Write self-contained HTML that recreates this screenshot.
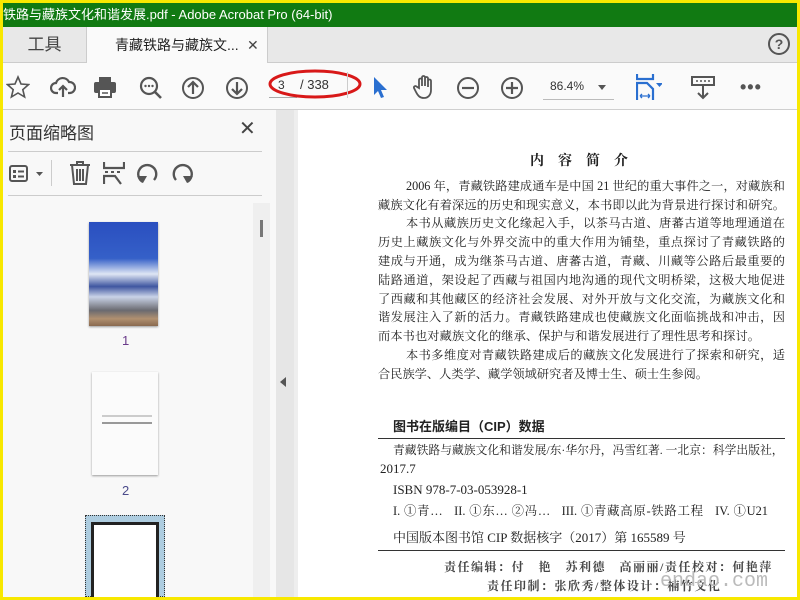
<!DOCTYPE html>
<html><head><meta charset="utf-8"><style>
*{margin:0;padding:0;box-sizing:border-box}
body{width:800px;height:600px;overflow:hidden;background:#f8e800;position:relative;font-family:"Liberation Sans","Noto Sans CJK SC",sans-serif}
.abs{position:absolute}
#title{left:3px;top:3px;width:794px;height:24px;background:#117a12;color:#fff;font-size:13px;line-height:24px;white-space:nowrap;overflow:hidden}
#tabs{left:3px;top:27px;width:794px;height:36px;background:#e8e8e8;border-bottom:1px solid #ccc}
#tool{left:3px;top:63px;width:794px;height:47px;background:#fafafa;border-bottom:1px solid #cfcfcf}
#left{left:3px;top:110px;width:273px;height:487px;background:#f8f8f8}
#split{left:276px;top:110px;width:18px;height:487px;background:#e6e6e6}
#doc{left:294px;top:110px;width:503px;height:487px;background:#fff}
.serif{font-family:"Liberation Serif","Noto Serif CJK SC",serif;color:#222}
.ln{position:absolute;left:378px;width:407px;font-size:12.2px;text-align:justify;text-align-last:justify;white-space:nowrap;line-height:19px;overflow:hidden}
svg{position:absolute}
</style></head><body>
<div id="title" class="abs">铁路与藏族文化和谐发展.pdf - Adobe Acrobat Pro (64-bit)</div>
<div id="tabs" class="abs">
 <div class="abs" style="left:0;top:0;width:83px;height:35px;font-size:17px;color:#444;line-height:35px;text-align:center">工具</div>
 <div class="abs" style="left:83px;top:0;width:182px;height:36px;background:#fafafa;border-left:1px solid #ccc;border-right:1px solid #ccc;font-size:14px;color:#222;line-height:36px;padding-left:28px">青藏铁路与藏族文...<span style="position:absolute;left:160px;font-size:14px;color:#444">✕</span></div>
 <div class="abs" style="left:765px;top:6px;width:22px;height:22px;border:2px solid #555;border-radius:50%;font-size:14px;font-weight:bold;color:#555;text-align:center;line-height:18px">?</div>
</div>
<div id="tool" class="abs">
 <svg style="left:3px;top:12px" width="24" height="24" viewBox="0 0 24 24"><path d="M12 2l3 7 7.5.6-5.7 5 1.8 7.4L12 18l-6.6 4 1.8-7.4L1.5 9.6 9 9z" fill="none" stroke="#555" stroke-width="1.6"/></svg>
 <svg style="left:47px;top:12px" width="26" height="24" viewBox="0 0 26 24"><path d="M8 18H6a5 5 0 010-10 7 7 0 0113-1 5 5 0 011 11h-2M13 22V11M9 15l4-4 4 4" fill="none" stroke="#555" stroke-width="2.2"/></svg>
 <svg style="left:90px;top:13px" width="24" height="22" viewBox="0 0 24 22"><rect x="6" y="1" width="12" height="5" fill="#555"/><rect x="1" y="6" width="22" height="11" rx="2" fill="#555"/><rect x="6" y="13" width="12" height="8" fill="#fff" stroke="#555" stroke-width="2"/><line x1="9" y1="17" x2="15" y2="17" stroke="#555" stroke-width="1.5"/></svg>
 <svg style="left:135px;top:12px" width="26" height="26" viewBox="0 0 26 26"><circle cx="11" cy="11" r="8" fill="none" stroke="#555" stroke-width="2.2"/><path d="M17 17l6 6" stroke="#555" stroke-width="2.6"/><circle cx="7.5" cy="11" r="1.2" fill="#555"/><circle cx="11" cy="11" r="1.2" fill="#555"/><circle cx="14.5" cy="11" r="1.2" fill="#555"/></svg>
 <svg style="left:178px;top:13px" width="24" height="24" viewBox="0 0 24 24"><circle cx="12" cy="12" r="10" fill="none" stroke="#555" stroke-width="2"/><path d="M12 18V7M7 11l5-5 5 5" fill="none" stroke="#555" stroke-width="2.2"/></svg>
 <svg style="left:222px;top:13px" width="24" height="24" viewBox="0 0 24 24"><circle cx="12" cy="12" r="10" fill="none" stroke="#555" stroke-width="2"/><path d="M12 6v11M7 13l5 5 5-5" fill="none" stroke="#555" stroke-width="2.2"/></svg>
 <div class="abs" style="left:266px;top:34px;width:28px;border-bottom:1px solid #aaa"></div>
 <div class="abs" style="left:275px;top:15px;font-size:12px;color:#333">3</div>
 <div class="abs" style="left:297px;top:14px;font-size:13px;color:#333">/ 338</div>
 <svg style="left:262px;top:3px" width="100" height="36" viewBox="0 0 100 36"><ellipse cx="50" cy="18" rx="45" ry="13" fill="none" stroke="#d81818" stroke-width="3"/></svg>
 <div class="abs" style="left:344px;top:9px;height:26px;border-left:1px solid #ccc"></div>
 <svg style="left:369px;top:12px" width="16" height="24" viewBox="0 0 16 24"><path d="M2 2v18l4-4 3 7 3-1-3-7h6z" fill="#2a6fd0"/></svg>
 <svg style="left:409px;top:11px" width="26" height="26" viewBox="0 0 26 26"><path d="M7 14V6a1.5 1.5 0 013 0v6V3.5a1.5 1.5 0 013 0V12V4.5a1.5 1.5 0 013 0V13V7a1.5 1.5 0 013 0v9c0 5-3 8-7 8s-6-2-8-6l-2-4a1.5 1.5 0 012.5-1.5z" fill="none" stroke="#555" stroke-width="1.8"/></svg>
 <svg style="left:453px;top:13px" width="24" height="24" viewBox="0 0 24 24"><circle cx="12" cy="12" r="10" fill="none" stroke="#555" stroke-width="2"/><path d="M6 12h12" stroke="#555" stroke-width="2.2"/></svg>
 <svg style="left:497px;top:13px" width="24" height="24" viewBox="0 0 24 24"><circle cx="12" cy="12" r="10" fill="none" stroke="#555" stroke-width="2"/><path d="M6 12h12M12 6v12" stroke="#555" stroke-width="2.2"/></svg>
 <div class="abs" style="left:547px;top:16px;font-size:12px;color:#333">86.4%</div>
 <div class="abs" style="left:595px;top:22px;border:4px solid transparent;border-top:5px solid #555"></div>
 <div class="abs" style="left:540px;top:36px;width:71px;border-bottom:1px solid #bbb"></div>
 <svg style="left:633px;top:11px" width="26" height="26" viewBox="0 0 26 26"><path d="M1 0v5h16V0M1 26V9h10l6 6v11" fill="none" stroke="#2a6fd0" stroke-width="2.2"/><path d="M4 22h10M4 22l2-2M4 22l2 2M14 22l-2-2M14 22l-2 2" stroke="#2a6fd0" stroke-width="1.3"/><path d="M20 9h7l-3.5 4z" fill="#2a6fd0"/></svg>
 <svg style="left:688px;top:13px" width="24" height="24" viewBox="0 0 24 24"><rect x="1" y="1" width="22" height="8" fill="none" stroke="#555" stroke-width="2"/><path d="M5 5h2M9 5h2M13 5h2M17 5h2" stroke="#555" stroke-width="1.5"/><path d="M12 10v12M7 17l5 5 5-5" fill="none" stroke="#555" stroke-width="2"/></svg>
 <div class="abs" style="left:737px;top:14px;font-size:18px;letter-spacing:1px;color:#555;font-weight:bold">•••</div>
</div>
<div id="left" class="abs">
 <div class="abs" style="left:6px;top:9px;font-size:17px;color:#333">页面缩略图</div>
 <div class="abs" style="left:236px;top:6px;font-size:20px;color:#444">✕</div>
 <div class="abs" style="left:5px;top:41px;width:254px;border-bottom:1px solid #ccc"></div>
 <svg style="left:6px;top:54px" width="36" height="20" viewBox="0 0 36 20"><rect x="1" y="2" width="17" height="15" rx="2" fill="none" stroke="#555" stroke-width="2"/><rect x="4" y="6" width="3" height="3" fill="#555"/><rect x="4" y="11" width="3" height="3" fill="#555"/><path d="M9 7.5h6M9 12.5h6" stroke="#555" stroke-width="2"/><path d="M27 8h7l-3.5 4z" fill="#555"/></svg>
 <div class="abs" style="left:48px;top:50px;height:26px;border-left:1px solid #ccc"></div>
 <svg style="left:66px;top:51px" width="22" height="24" viewBox="0 0 22 24"><path d="M1 4h20M8 4V1h6v3M3 4l2 19h12l2-19M8 8v12M11 8v12M14 8v12" fill="none" stroke="#555" stroke-width="2"/></svg>
 <svg style="left:100px;top:51px" width="22" height="24" viewBox="0 0 22 24"><path d="M1 1v6h20V1M1 23v-8h11l6 8" fill="none" stroke="#555" stroke-width="2.2"/><path d="M2 11h3M8 11h3M14 11h3" stroke="#555" stroke-width="2"/></svg>
 <svg style="left:133px;top:52px" width="24" height="22" viewBox="0 0 24 22"><path d="M7 20A9 9 0 1118 18" fill="none" stroke="#555" stroke-width="2.4"/><path d="M1 14l6 7 4-7z" fill="#555"/></svg>
 <svg style="left:167px;top:52px" width="24" height="22" viewBox="0 0 24 22"><path d="M17 20A9 9 0 106 18" fill="none" stroke="#555" stroke-width="2.4"/><path d="M23 14l-6 7-4-7z" fill="#555"/></svg>
 <div class="abs" style="left:5px;top:85px;width:254px;border-bottom:1px solid #ccc"></div>
 <div class="abs" style="left:250px;top:93px;width:17px;height:394px;background:#efefef"></div>
 <div class="abs" style="left:257px;top:110px;width:3px;height:17px;background:#777"></div>
 <div class="abs" style="left:86px;top:112px;width:69px;height:104px;background:linear-gradient(#2a4fc0 0%,#3560c8 35%,#dfe6f4 50%,#3f56a0 62%,#c9d3e8 72%,#6a6a70 85%,#b09070 93%,#8a6a50 100%);box-shadow:0 1px 2px #999"></div>
 <div class="abs" style="left:119px;top:223px;font-size:13px;color:#6a3a8a">1</div>
 <div class="abs" style="left:89px;top:262px;width:66px;height:103px;background:#fbfbfb;box-shadow:0 1px 2px #999"></div>
 <div class="abs" style="left:99px;top:305px;width:50px;height:2px;background:#ccc"></div>
 <div class="abs" style="left:99px;top:312px;width:50px;height:2px;background:#999"></div>
 <div class="abs" style="left:119px;top:373px;font-size:13px;color:#4a4a8a">2</div>
 <div class="abs" style="left:82px;top:405px;width:80px;height:82px;background:#aecde0;border:1px dotted #333"></div>
 <div class="abs" style="left:88px;top:412px;width:68px;height:75px;background:#fff;border:3px solid #222;border-bottom:none"></div>
</div>
<div id="split" class="abs"><div class="abs" style="left:4px;top:267px;border:5px solid transparent;border-right:6px solid #555;border-left:none"></div></div>
<div id="doc" class="abs"><div class="abs" style="left:0;top:0;width:4px;height:487px;background:#eee"></div></div>
<div class="serif">
 <div class="abs" style="left:530px;top:150px;font-size:14px;font-weight:bold;letter-spacing:14px">内容简介</div>
 <div class="ln" style="left:406px;width:379px;top:177px">2006 年，青藏铁路建成通车是中国 21 世纪的重大事件之一，对藏族和</div>
 <div class="ln" style="top:196px">藏族文化有着深远的历史和现实意义，本书即以此为背景进行探讨和研究。</div>
 <div class="ln" style="left:406px;width:379px;top:214px">本书从藏族历史文化缘起入手，以茶马古道、唐蕃古道等地理通道在</div>
 <div class="ln" style="top:233px">历史上藏族文化与外界交流中的重大作用为铺垫，重点探讨了青藏铁路的</div>
 <div class="ln" style="top:252px">建成与开通，成为继茶马古道、唐蕃古道，青藏、川藏等公路后最重要的</div>
 <div class="ln" style="top:271px">陆路通道，架设起了西藏与祖国内地沟通的现代文明桥梁，这极大地促进</div>
 <div class="ln" style="top:290px">了西藏和其他藏区的经济社会发展、对外开放与文化交流，为藏族文化和</div>
 <div class="ln" style="top:308px">谐发展注入了新的活力。青藏铁路建成也使藏族文化面临挑战和冲击，因</div>
 <div class="ln" style="top:327px;width:382px">而本书也对藏族文化的继承、保护与和谐发展进行了理性思考和探讨。</div>
 <div class="ln" style="left:406px;width:379px;top:346px">本书多维度对青藏铁路建成后的藏族文化发展进行了探索和研究，适</div>
 <div class="ln" style="top:365px;width:330px">合民族学、人类学、藏学领域研究者及博士生、硕士生参阅。</div>
 <div class="abs" style="left:393px;top:416px;font-size:13px;font-weight:bold;font-family:'Liberation Sans','Noto Sans CJK SC',sans-serif">图书在版编目（CIP）数据</div>
 <div class="abs" style="left:378px;top:438px;width:407px;border-top:1px solid #333"></div>
 <div class="ln" style="left:393px;width:390px;top:441px;font-size:11.8px">青藏铁路与藏族文化和谐发展/东·华尔丹，冯雪红著. 一北京：科学出版社，</div>
 <div class="abs" style="left:380px;top:461px;font-size:13px">2017.7</div>
 <div class="abs" style="left:393px;top:482px;font-size:13px">ISBN 978-7-03-053928-1</div>
 <div class="ln" style="left:393px;width:375px;top:502px;font-size:12.4px">I. ①青…&nbsp;&nbsp; II. ①东… ②冯…&nbsp;&nbsp; III. ①青藏高原-铁路工程&nbsp;&nbsp; IV. ①U21</div>
 <div class="abs" style="left:393px;top:527px;font-size:13px;white-space:nowrap">中国版本图书馆 CIP 数据核字（2017）第 165589 号</div>
 <div class="abs" style="left:378px;top:550px;width:407px;border-top:1px solid #333"></div>
 <div class="abs" style="left:444px;top:558px;font-size:12px;white-space:nowrap;font-weight:bold;color:#444;letter-spacing:1.5px">责任编辑：付　艳　苏利德　高丽丽/责任校对：何艳萍</div>
 <div class="abs" style="left:487px;top:577px;font-size:12px;white-space:nowrap;font-weight:bold;color:#444;letter-spacing:1.5px">责任印制：张欣秀/整体设计：楠竹文化</div>
 <div class="abs" style="left:660px;top:570px;font-size:20px;color:#bbb;font-family:'Liberation Mono',monospace">endao.com</div>
</div>
</body></html>
